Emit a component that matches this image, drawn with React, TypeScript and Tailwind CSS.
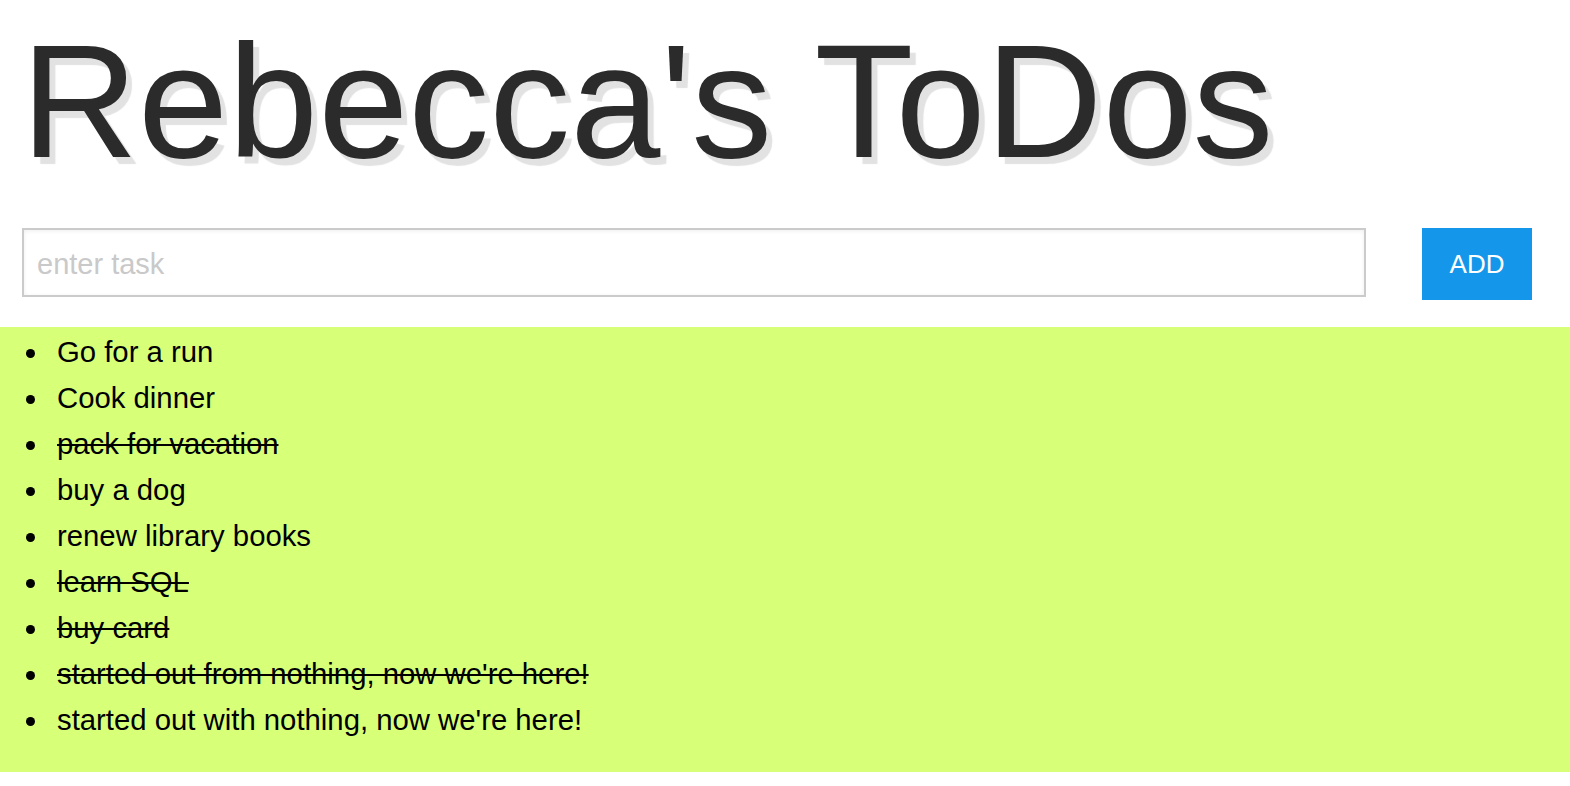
import React, { useState } from 'react';

type Todo = { text: string; done: boolean };

const initialTodos: Todo[] = [
  { text: 'Go for a run', done: false },
  { text: 'Cook dinner', done: false },
  { text: 'pack for vacation', done: true },
  { text: 'buy a dog', done: false },
  { text: 'renew library books', done: false },
  { text: 'learn SQL', done: true },
  { text: 'buy card', done: true },
  { text: "started out from nothing, now we're here!", done: true },
  { text: "started out with nothing, now we're here!", done: false },
];

export default function App() {
  const [todos, setTodos] = useState<Todo[]>(initialTodos);
  const [task, setTask] = useState('');

  const addTodo = () => {
    if (!task.trim()) return;
    setTodos([...todos, { text: task.trim(), done: false }]);
    setTask('');
  };

  const toggle = (i: number) => {
    setTodos(todos.map((t, idx) => (idx === i ? { ...t, done: !t.done } : t)));
  };

  return (
    <div className="min-h-screen bg-white font-['Liberation_Sans',Arial,sans-serif]">
      {/* Title */}
      <h1 className="pl-[21px] pt-[20px] text-[162px] leading-none font-normal text-[#2b2b2b] [text-shadow:6px_7px_1px_#e2e2e2]">
        Rebecca's ToDos
      </h1>

      {/* Input row */}
      <div className="flex items-start pl-[22px] pr-[38px] mt-[46px]">
        <input
          value={task}
          onChange={(e) => setTask(e.target.value)}
          onKeyDown={(e) => e.key === 'Enter' && addTodo()}
          placeholder="enter task"
          className="w-[1344px] shrink-0 h-[69px] border-2 border-[#cbcbcb] pl-[13px] pt-[4px] text-[29px] text-[#333] placeholder:text-[#c9c9c9] shadow-[inset_0_1px_4px_rgba(0,0,0,0.07)] outline-none"
        />
        <button
          onClick={addTodo}
          className="ml-auto w-[110px] h-[72px] bg-[#1497ea] text-white text-[26px]"
        >
          ADD
        </button>
      </div>

      {/* List */}
      <ul className="mt-[27px] bg-[#d8ff78] pl-[26px] pt-[2px] pb-[29px] text-[29.3px] leading-[46px] text-black">
        {todos.map((t, i) => (
          <li key={i} onClick={() => toggle(i)} className="flex items-center cursor-pointer">
            <span className="w-[9px] h-[9px] mt-[3px] mr-[22px] shrink-0 rounded-full bg-black" />
            <span className={t.done ? 'line-through' : ''}>{t.text}</span>
          </li>
        ))}
      </ul>
    </div>
  );
}
